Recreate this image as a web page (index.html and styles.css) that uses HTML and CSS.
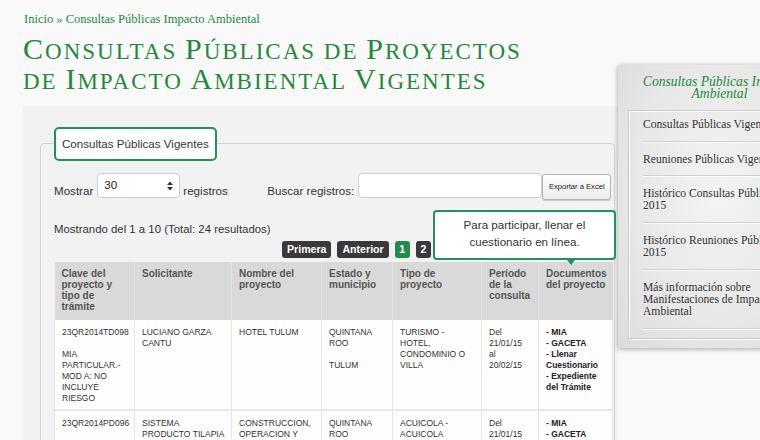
FILE: index.html
```html
<!DOCTYPE html>
<html lang="es">
<head>
<meta charset="utf-8">
<title>Consultas Públicas de Proyectos de Impacto Ambiental Vigentes</title>
<link rel="stylesheet" href="styles.css">
</head>
<body>
<div class="page">
  <main class="main">
    <nav class="crumbs"><a href="#">Inicio</a> » <a href="#">Consultas Públicas Impacto Ambiental</a></nav>
    <h1 class="title"><span class="big">C</span>onsultas <span class="big">P</span>úblicas de <span class="big">P</span>royectos<br>de <span class="big">I</span>mpacto <span class="big">A</span>mbiental <span class="big">V</span>igentes</h1>
    <section class="panel">
      <fieldset class="box">
        <legend class="box-legend">Consultas Públicas Vigentes</legend>
        <div class="controls">
          <span class="lbl">Mostrar</span>
          <div class="select"><span class="select-val">30</span><svg class="select-arrows" width="6" height="10" viewBox="0 0 6 10"><path d="M0 4 L3 0.5 L6 4 Z M0 6 L3 9.5 L6 6 Z" fill="#333"/></svg></div>
          <span class="lbl lbl-after">registros</span>
          <span class="lbl lbl-search">Buscar registros:</span>
          <input class="search" type="text">
          <button class="excel" type="button">Exportar a Excel</button>
        </div>
        <p class="info">Mostrando del 1 a 10 (Total: 24 resultados)</p>
        <div class="pager">
          <span class="pbtn">Primera</span>
          <span class="pbtn">Anterior</span>
          <span class="pbtn pbtn-on">1</span>
          <span class="pbtn">2</span>
          <div class="tip">Para participar, llenar el cuestionario en línea.</div>
        </div>
        <table class="grid">
          <colgroup>
            <col class="c1"><col class="c2"><col class="c3"><col class="c4"><col class="c5"><col class="c6"><col class="c7">
          </colgroup>
          <thead>
            <tr>
              <th>Clave del proyecto y tipo de trámite</th>
              <th>Solicitante</th>
              <th>Nombre del proyecto</th>
              <th>Estado y municipio</th>
              <th>Tipo de proyecto</th>
              <th>Período de la consulta</th>
              <th>Documentos del proyecto</th>
            </tr>
          </thead>
          <tbody>
            <tr>
              <td>23QR2014TD098<br><br>MIA PARTICULAR.- MOD A: NO INCLUYE RIESGO</td>
              <td>LUCIANO GARZA CANTU</td>
              <td>HOTEL TULUM</td>
              <td>QUINTANA ROO<br><br>TULUM</td>
              <td>TURISMO - HOTEL, CONDOMINIO O VILLA</td>
              <td>Del<br>21/01/15<br>al<br>20/02/15</td>
              <td class="docs">- MIA<br>- GACETA<br>- Llenar Cuestionario<br>- Expediente del Trámite</td>
            </tr>
            <tr>
              <td>23QR2014PD096<br><br>MIA PARTICULAR.- MOD A: NO INCLUYE RIESGO</td>
              <td>SISTEMA PRODUCTO TILAPIA DE QUINTANA ROO A.C.</td>
              <td>CONSTRUCCION, OPERACION Y MANTENIMIENTO DE UNA GRANJA ACUICOLA</td>
              <td>QUINTANA ROO<br><br>BACALAR</td>
              <td>ACUICOLA - ACUICOLA</td>
              <td>Del<br>21/01/15<br>al<br>20/02/15</td>
              <td class="docs">- MIA<br>- GACETA<br>- Llenar Cuestionario<br>- Expediente del Trámite</td>
            </tr>
          </tbody>
        </table>
      </fieldset>
    </section>
  </main>
  <aside class="side">
    <h2 class="side-title">Consultas Públicas Impacto Ambiental</h2>
    <ul class="side-box">
      <li class="side-item">Consultas Públicas Vigentes</li>
      <li class="side-item">Reuniones Públicas Vigentes</li>
      <li class="side-item">Histórico Consultas Públicas 2015</li>
      <li class="side-item">Histórico Reuniones Públicas 2015</li>
      <li class="side-item">Más información sobre Manifestaciones de Impacto Ambiental</li>
    </ul>
  </aside>
</div>
</body>
</html>
```

FILE: styles.css
```css
* { box-sizing: border-box; }
html, body { margin: 0; padding: 0; overflow: hidden; }
body {
  width: 760px;
  height: 440px;
  background: #f9f9f9;
  font-family: "Liberation Sans", Arial, sans-serif;
  color: #333;
}
.page {
  display: flex;
  align-items: flex-start;
  padding: 11px 0 0 23px;
  width: 1000px;
}
.main { flex: 0 0 594px; }

.crumbs {
  font-family: "Liberation Serif", "Times New Roman", serif;
  font-size: 12.5px;
  line-height: 16px;
  color: #228a3c;
  padding-left: 1px;
}
.crumbs a { color: inherit; text-decoration: none; }

.title {
  margin: 9.6px 0 0;
  font-family: "Liberation Serif", "Times New Roman", serif;
  font-weight: normal;
  font-size: 23px;
  line-height: 30px;
  text-transform: uppercase;
  letter-spacing: 2px;
  color: #1f8a3a;
  white-space: nowrap;
}
.big { font-size: 30px; line-height: 0; }

.panel {
  margin-top: 9.4px;
  background: #f2f2f2;
  padding: 21px 3px 0 17px;
  min-height: 360px;
}
.box {
  position: relative;
  margin: 0;
  min-width: 0;
  border: 1px solid #d2d2d2;
  border-radius: 4px;
  padding: 0 1px 30px 13px;
}
.box-legend {
  padding: 8px 6px;
  background: #fff;
  border: 2px solid #23925a;
  border-radius: 5px;
  font-size: 11.6px;
  line-height: 14px;
  color: #333;
}

.controls {
  display: flex;
  align-items: flex-start;
  margin-top: 12px;
  height: 27px;
}
.lbl {
  margin-top: 11px;
  font-size: 11.6px;
  line-height: 14px;
  color: #333;
  white-space: nowrap;
}
.select {
  display: flex;
  justify-content: space-between;
  width: 83px;
  height: 25px;
  margin: 0 3px 0 4px;
  padding: 4px 6px 0 6px;
  background: #fff;
  border: 1px solid #cfcfcf;
  border-radius: 4px;
}
.select-val { font-size: 11.6px; line-height: 14px; color: #222; }
.select-arrows { margin-top: 3px; }
.lbl-search { margin-left: 39.5px; }
.search {
  width: 184px;
  height: 25px;
  margin: 0 0 0 4px;
  padding: 0 4px;
  background: #fff;
  border: 1px solid #cfcfcf;
  border-radius: 4px;
}
.excel {
  width: 69px;
  height: 26px;
  margin-top: 1px;
  padding: 0;
  border: 1px solid #b4b4b4;
  border-radius: 3px;
  background: linear-gradient(#fdfdfd, #ebebeb);
  box-shadow: 0 1px 1px rgba(0,0,0,.18);
  font-family: "Liberation Sans", Arial, sans-serif;
  font-size: 7.6px;
  color: #222;
}

.info {
  margin: 22px 0 0;
  font-size: 11.4px;
  line-height: 14px;
  color: #333;
}

.pager {
  position: relative;
  display: flex;
  gap: 6px;
  margin-top: 4.8px;
  padding-left: 228px;
  height: 17px;
}
.pbtn {
  height: 17px;
  padding: 0 5px;
  background: #3a3a3a;
  border-radius: 3px;
  color: #fff;
  font-weight: bold;
  font-size: 10.6px;
  line-height: 17px;
  white-space: nowrap;
}
.pbtn-on { background: #1f8d4c; padding: 0 4.5px; }

.tip {
  position: absolute;
  left: 379px;
  top: -30.3px;
  z-index: 2;
  width: 183px;
  height: 50px;
  padding: 5px 8px 0;
  background: #fff;
  border: 2px solid #23925a;
  border-radius: 4px;
  text-align: center;
  font-size: 11.6px;
  line-height: 16.7px;
  color: #333;
}
.tip::after {
  content: "";
  position: absolute;
  left: 132px;
  bottom: -7px;
  border-top: 5px solid #23925a;
  border-left: 4px solid transparent;
  border-right: 4px solid transparent;
}

.grid {
  width: 558px;
  margin-top: 4px;
  table-layout: fixed;
  border-collapse: collapse;
}
.c1 { width: 80px; }
.c2 { width: 97px; }
.c3 { width: 90px; }
.c4 { width: 71px; }
.c5 { width: 89px; }
.c6 { width: 57px; }
.c7 { width: 74px; }
.grid th {
  padding: 6.5px 6px 7.5px 7px;
  background: #d9d9d9;
  border-left: 1px solid #e3e3e3;
  color: #555;
  font-size: 10px;
  line-height: 11px;
  font-weight: bold;
  text-align: left;
  vertical-align: top;
}
.grid th:first-child { border-left: 0; }
.grid td {
  padding: 7px 6px 5px 7px;
  background: #fdfdfd;
  border: 1px solid #e6e6e6;
  border-bottom: 2px solid #e8e8e8;
  border-top: 0;
  font-size: 8.5px;
  line-height: 11px;
  color: #333;
  vertical-align: top;
}
.grid td.docs { font-weight: bold; color: #222; }

.side {
  flex: 0 0 203px;
  margin-top: 54px;
  padding: 10.5px 0 9.5px;
  background: radial-gradient(ellipse at 50% 45%, #f4f4f4 0%, #e7e7e7 60%, #dbdbdb 100%);
  box-shadow: 0 1px 5px rgba(0,0,0,.35);
  font-family: "Liberation Serif", "Times New Roman", serif;
}
.side-title {
  margin: 0 6px;
  text-align: center;
  font-style: italic;
  font-weight: normal;
  font-size: 13.6px;
  line-height: 12.3px;
  color: #1f8a3a;
}
.side-box {
  margin: 10px 10px 0;
  padding: 0 14px 9px;
  list-style: none;
  border: 1px solid #c9c9c9;
  box-shadow: inset 1px 1px 0 #fbfbfb, 1px 1px 0 #fbfbfb;
}
.side-item {
  padding: 12px 0 9px;
  border-bottom: 1px solid #cfcfcf;
  box-shadow: 0 1px 0 #fafafa;
  font-size: 11.6px;
  line-height: 12.4px;
  color: #333;
}
.side-item:first-child { padding-top: 8px; }
```
